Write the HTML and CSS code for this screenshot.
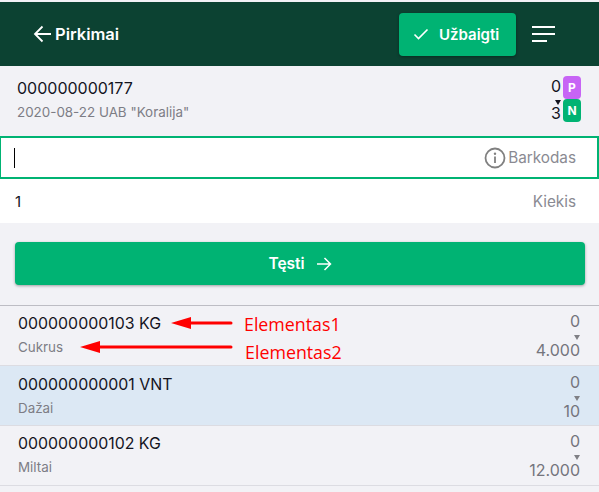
FILE: index.html
```html
<!DOCTYPE html>
<html>
<head>
<title>Pirkimai</title>
<meta name="viewport" content="width=device-width, initial-scale=1.0">
<link rel="stylesheet" href="styles.css">
</head>
<body>

<header class="topbar">
  <div class="back">
    <svg class="back-icon" width="20" height="18" viewBox="0 0 20 18"><path d="M18 9H2M9.500 1.500 2 9l7.500 7.500" fill="none" stroke="#fff" stroke-width="1.800"/></svg>
    <span>Pirkimai</span>
  </div>
  <div class="done">
    <svg width="16" height="12" viewBox="0 0 16 12"><path d="M1.500 6.500 5.500 10.500 14.500 1.500" fill="none" stroke="#fff" stroke-width="1.600"/></svg>
    <span>Užbaigti</span>
  </div>
  <div class="burger"><i class="long"></i><i class="long"></i><i class="short"></i></div>
</header>

<section class="doc">
  <div>
    <div class="doc-no">000000000177</div>
    <div class="doc-sub">2020-08-22 UAB "Koralija"</div>
  </div>
  <div class="doc-counts">
    <div class="count-line"><span class="num-top">0</span><b class="tag tag-p">P</b></div>
    <span class="tri tri-dark"></span>
    <div class="count-line"><span class="num-bot">3</span><b class="tag tag-n">N</b></div>
  </div>
</section>

<div class="field field-focus">
  <span class="caret"></span>
  <svg class="info" width="22" height="22" viewBox="0 0 22 22"><circle cx="11" cy="11" r="9.500" fill="none" stroke="#808080" stroke-width="1.800"/><circle cx="11" cy="6.800" r="1.200" fill="#808080"/><path d="M11 9.500V16" stroke="#808080" stroke-width="1.800"/></svg>
  <span class="hint">Barkodas</span>
</div>
<div class="field field-qty">
  <span class="qty">1</span>
  <span class="hint">Kiekis</span>
</div>

<div class="next-wrap">
  <div class="next">
    <span>Tęsti</span>
    <svg width="16" height="14" viewBox="0 0 16 14"><path d="M1 7H14.500M8.500 1l6 6-6 6" fill="none" stroke="#fff" stroke-width="1.500"/></svg>
  </div>
</div>

<div class="list">
  <div class="row">
    <div class="row-left">
      <div class="row-code">
        <span class="code">000000000103 KG</span>
        <svg class="arrow" width="62" height="14" viewBox="0 0 62 14"><path d="M0 7 20 1V5.500H60a1.500 1.500 0 0 1 0 3H20V13Z" fill="#f00"/></svg>
        <span class="note">Elementas1</span>
      </div>
      <div class="row-name">
        <span class="name">Cukrus</span>
        <svg class="arrow2" width="153" height="14" viewBox="0 0 153 14"><path d="M0 7 20 1V5.500H151a1.500 1.500 0 0 1 0 3H20V13Z" fill="#f00"/></svg>
        <span class="note note2">Elementas2</span>
      </div>
    </div>
    <div class="row-right"><span>0</span><span class="tri"></span><span>4.000</span></div>
  </div>
  <div class="row row-active">
    <div class="row-left">
      <div class="row-code"><span class="code">000000000001 VNT</span></div>
      <div class="row-name"><span class="name">Dažai</span></div>
    </div>
    <div class="row-right"><span>0</span><span class="tri"></span><span>10</span></div>
  </div>
  <div class="row">
    <div class="row-left">
      <div class="row-code"><span class="code">000000000102 KG</span></div>
      <div class="row-name"><span class="name">Miltai</span></div>
    </div>
    <div class="row-right"><span>0</span><span class="tri"></span><span>12.000</span></div>
  </div>
</div>

</body>
</html>
```

FILE: styles.css
```css
html, body {
  height: 100%;
}
body {
  margin: 0;
  padding-top: 2px;
  background-color: #f2f2f6;
  font-family: Inter, "Liberation Sans", sans-serif;
  color: #14141e;
  overflow: hidden;
}

/* top bar */
.topbar {
  height: 64px;
  background-color: #0c4232;
  display: flex;
  align-items: center;
  color: #fff;
  padding: 0 44px 0 33px;
  box-sizing: border-box;
}
.back {
  display: flex;
  align-items: center;
  gap: 2px;
  font-size: 16.500px;
  font-weight: 600;
  flex: 1;
}
.done {
  width: 117px;
  height: 43px;
  background-color: #00b373;
  border-radius: 4px;
  box-shadow: 0 1px 3px rgba(0, 0, 0, 0.35);
  display: flex;
  align-items: center;
  gap: 10px;
  padding-left: 14px;
  box-sizing: border-box;
  font-size: 15px;
  font-weight: 600;
}
.burger {
  margin-left: 16px;
  width: 23px;
  display: flex;
  flex-direction: column;
  gap: 4.500px;
}
.burger i {
  display: block;
  height: 2.500px;
  background-color: #fff;
}
.burger .short {
  width: 15px;
}

/* document info */
.doc {
  height: 64px;
  padding: 12px 18px 0 17px;
  box-sizing: border-box;
  display: flex;
  justify-content: space-between;
}
.doc-no {
  font-size: 16px;
  line-height: 20px;
}
.doc-sub {
  font-size: 13.400px;
  line-height: 18px;
  margin-top: 5px;
  color: #7d7d85;
}
.doc-counts {
  position: relative;
  display: flex;
  flex-direction: column;
  align-items: flex-end;
  margin-top: -2px;
  font-size: 16px;
}
.count-line {
  display: flex;
  align-items: center;
  gap: 2px;
  height: 23px;
}
.num-top {
  margin-bottom: 3px;
}
.num-bot {
  margin-top: 5px;
}
.tag {
  width: 18px;
  height: 23px;
  border-radius: 4px;
  color: #fff;
  font-size: 12px;
  font-weight: 700;
  display: flex;
  align-items: center;
  justify-content: center;
}
.tag-p {
  background-color: #c764f5;
}
.tag-n {
  background-color: #00b373;
}
.tri {
  display: block;
  width: 0;
  height: 0;
  border-left: 3.500px solid transparent;
  border-right: 3.500px solid transparent;
  border-top: 5px solid #808085;
}
.doc-counts .tri {
  position: absolute;
  top: 24px;
  right: 20px;
  border-top-color: #14141e;
}

/* inputs */
.field {
  display: flex;
  align-items: center;
  justify-content: flex-end;
  background-color: #fff;
  box-sizing: border-box;
  padding-right: 23px;
}
.field-focus {
  margin-top: 6px;
  height: 43px;
  border: 2px solid #00b373;
  border-left-width: 1px;
  padding-left: 13px;
  padding-right: 21px;
}
.field-qty {
  height: 44px;
  padding-left: 15px;
}
.caret {
  width: 1px;
  height: 20px;
  background-color: #000;
  margin-right: auto;
}
.qty {
  margin-right: auto;
  font-size: 15px;
}
.info {
  margin-right: 2px;
}
.hint {
  font-size: 15.300px;
  color: #8a8a92;
}

/* continue button */
.next-wrap {
  padding: 19px 14px 20px 15px;
}
.next {
  height: 43px;
  background-color: #00b373;
  border-radius: 4px;
  box-shadow: 0 1px 3px rgba(0, 0, 0, 0.35);
  color: #fff;
  font-size: 15.500px;
  font-weight: 600;
  display: flex;
  align-items: center;
  justify-content: center;
  gap: 11px;
}

/* items */
.list {
  border-top: 1px solid #bdbdc4;
}
.row {
  height: 60px;
  border-bottom: 1px solid #dcdce2;
  box-sizing: border-box;
  padding: 0 19px 0 18px;
  display: flex;
  justify-content: space-between;
}
.row-active {
  background-color: #dce8f4;
}
.row-left {
  padding-top: 7px;
}
.row-active .row-left {
  padding-top: 8px;
}
.row-code, .row-name {
  display: flex;
  align-items: center;
}
.row-code {
  height: 20px;
}
.row-name {
  height: 20px;
  margin-top: 4px;
}
.code {
  font-size: 15.900px;
}
.name {
  font-size: 13.400px;
  color: #7d7d85;
}
.arrow {
  margin-left: 10px;
}
.arrow2 {
  margin-left: 17px;
}
.note {
  font-family: "Open Sans", "Liberation Sans", sans-serif;
  font-size: 17.800px;
  color: #f00;
  margin-left: 11px;
  margin-top: 2px;
}
.note2 {
  margin-left: 12px;
  margin-top: 10px;
}
.row-right {
  display: flex;
  flex-direction: column;
  align-items: flex-end;
  padding-top: 6px;
  font-size: 16px;
  line-height: 18px;
  color: #75757d;
}
.row-active .row-right {
  padding-top: 7px;
}
.row-right .tri {
  margin: 5px 0 1px;
}
```
